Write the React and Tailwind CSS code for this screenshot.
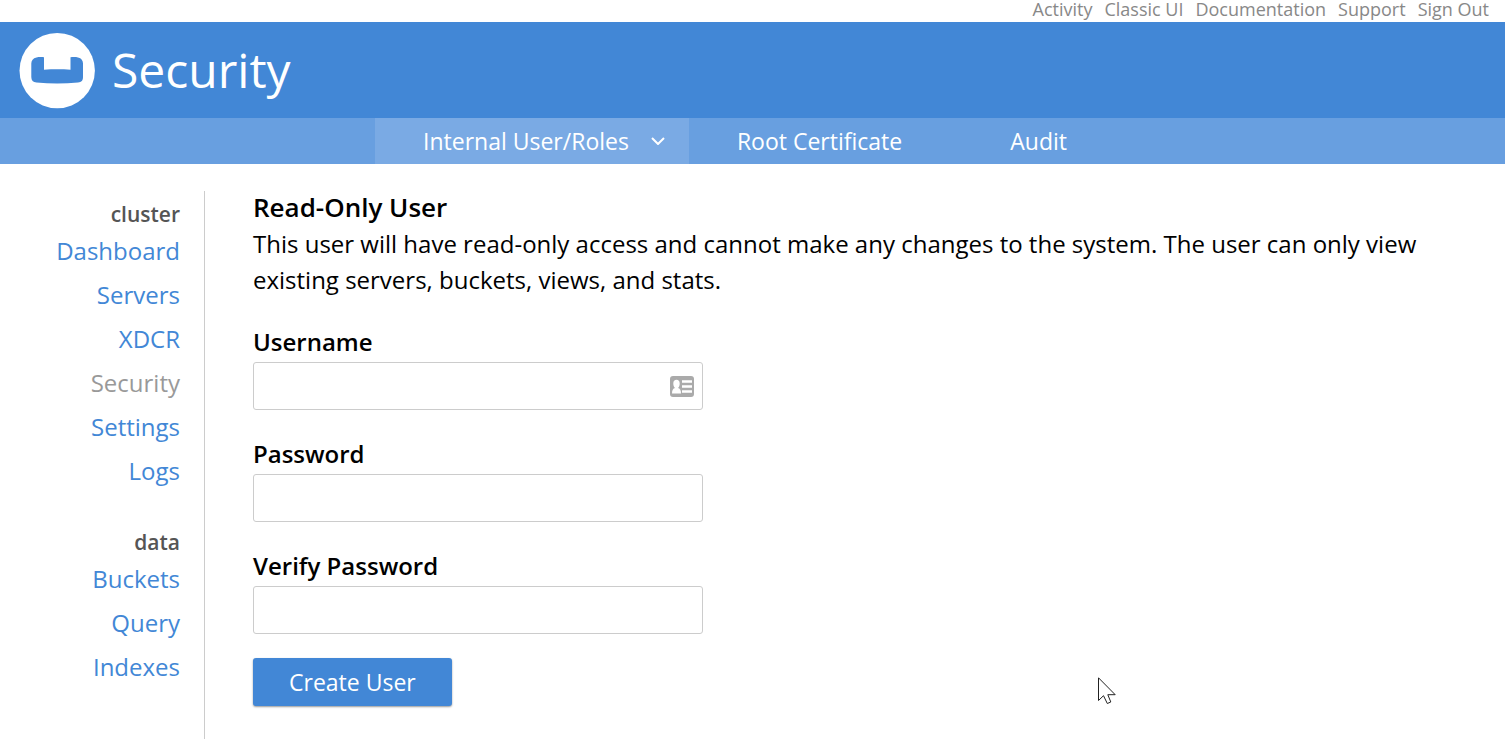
import React from 'react';

const utilityLinks = ['Activity', 'Classic UI', 'Documentation', 'Support', 'Sign Out'];
const navGroups = [
  { title: 'cluster', items: ['Dashboard', 'Servers', 'XDCR', 'Security', 'Settings', 'Logs'] },
  { title: 'data', items: ['Buckets', 'Query', 'Indexes'] },
];
const currentPage = 'Security';

function Logo() {
  return (
    <svg className="size-[76px] shrink-0 overflow-visible" viewBox="0 0 76 76" aria-hidden="true">
      <circle cx="37.2" cy="38.6" r="37.7" fill="#fff" />
      <path
        d="M24 25.200V37.800C33 37.200 42 37.200 50.500 37.800V25.200C53 24.800 56 24.900 58 25.400C61.500 26.200 63 28.500 63 31.500V45C63 48.500 61.500 50 58 50.500C44 51.800 30.500 51.800 16.500 50.500C13 50 11.300 48.500 11.300 45V31.500C11.300 28.500 13 26.200 16.500 25.400C18.500 24.900 21.500 24.800 24 25.200Z"
        fill="#4287d6"
      />
    </svg>
  );
}

function ContactCardIcon() {
  return (
    <svg className="pointer-events-none absolute top-[14px] right-[9px] h-[21px] w-6" viewBox="0 0 24 21" aria-hidden="true">
      <rect width="24" height="21" rx="3" fill="#aaa" />
      <path d="M2 17.500C2 14 3 12.500 5 12C4 11 3.300 9.500 3.300 7.500C3.300 5 4.500 3.800 6.500 3.800C8.500 3.800 9.700 5 9.700 7.500C9.700 9.500 9 11 8 12C10 12.500 11 14 11 17.500Z" fill="#fff" />
      <path d="M12 5.500H22M12 10.500H22M12 15.500H22" stroke="#fff" strokeWidth="2.400" />
    </svg>
  );
}

function Field({ id, label, type, children }) {
  return (
    <div className="mb-6">
      <label htmlFor={id} className="block text-2xl leading-10 font-semibold">{label}</label>
      <div className="relative">
        <input id={id} type={type} className="block h-12 w-full rounded-[3px] border border-[#ccc] bg-white px-3 text-2xl outline-none" />
        {children}
      </div>
    </div>
  );
}

export default function App() {
  return (
    <div className="relative flex min-h-screen flex-col bg-white font-['Open_Sans','Noto_Sans',sans-serif] text-black">
      <nav className="flex h-[22px] justify-end gap-3 pr-4 text-lg leading-[18px] text-[#888]" aria-label="Account">
        {utilityLinks.map((t) => <a key={t} href="#">{t}</a>)}
      </nav>
      <header className="flex h-24 items-center gap-4 bg-[#4287d6] pl-5 text-white">
        <Logo />
        <h1 className="text-5xl leading-none">Security</h1>
      </header>
      <nav className="flex justify-center bg-[#689fe0] pr-[3px] text-[23px] leading-[46px] text-white" aria-label="Security sections">
        <a href="#" aria-current="page" className="flex items-center gap-[22px] bg-[#7aaae4] pr-6 pl-12">
          Internal User/Roles
          <svg className="h-2 w-[14px]" viewBox="0 0 14 8" fill="none" stroke="#fff" strokeWidth="2" aria-hidden="true">
            <path d="M1 1L7 7L13 1" />
          </svg>
        </a>
        <a href="#" className="pr-[60px] pl-12">Root Certificate</a>
        <a href="#" className="pr-[60px] pl-12">Audit</a>
      </nav>
      <div className="flex flex-1">
        <aside className="mt-[27px] w-[205px] shrink-0 border-r border-[#ccc] pt-2 pr-6 text-right">
          {navGroups.map((g) => (
            <section key={g.title} className="mb-[34px] last:mb-0">
              <h2 className="text-[21px] leading-[30px] font-semibold text-[#555]">{g.title}</h2>
              {g.items.map((t) => (
                <a key={t} href="#" className={`block text-2xl leading-[44px] ${t === currentPage ? 'text-[#999]' : 'text-[#4287d6]'}`}>{t}</a>
              ))}
            </section>
          ))}
        </aside>
        <main className="flex-1 px-12 pt-6">
          <h2 className="text-[26px] leading-[38px] font-semibold">Read-Only User</h2>
          <p className="text-2xl leading-9">This user will have read-only access and cannot make any changes to the system. The user can only view existing servers, buckets, views, and stats.</p>
          <form className="mt-6 max-w-[450px]">
            <Field id="username" label="Username" type="text"><ContactCardIcon /></Field>
            <Field id="password" label="Password" type="password" />
            <Field id="verify" label="Verify Password" type="password" />
            <button type="button" className="h-12 rounded-[3px] bg-[#4287d6] px-9 text-[23px] text-white shadow-[0_1px_2px_rgba(0,0,0,0.4)]">Create User</button>
          </form>
        </main>
      </div>
      <svg className="pointer-events-none absolute top-[677px] left-[1098px] h-[28px] w-[19px]" viewBox="0 0 19 28" aria-hidden="true">
        <path d="M0.500 0.800V23.500L5.500 18.700L9.300 26.500L12.800 25L9.800 17.700H17.200Z" fill="#fff" stroke="#222" />
      </svg>
    </div>
  );
}
